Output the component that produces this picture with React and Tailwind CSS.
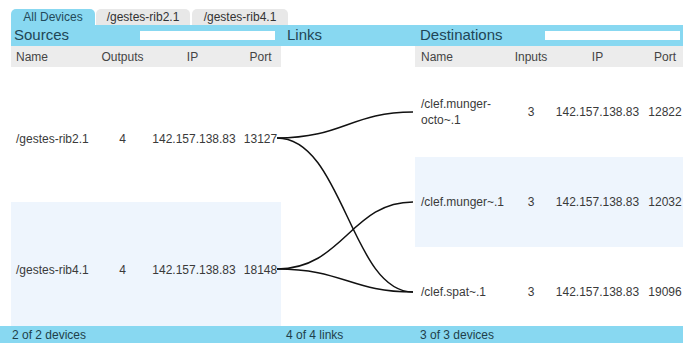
const sources = [
  { name: "/gestes-rib2.1", n: "4", ip: "142.157.138.83", port: "13127", bg: "bg-white pt-[8px]" },
  { name: "/gestes-rib4.1", n: "4", ip: "142.157.138.83", port: "18148", bg: "bg-[#eef5fd]" },
]

const destinations = [
  { name: ["/clef.munger-", "octo~.1"], n: "3", ip: "142.157.138.83", port: "12822", bg: "bg-white" },
  { name: ["/clef.munger~.1"], n: "3", ip: "142.157.138.83", port: "12032", bg: "bg-[#eef5fd]" },
  { name: ["/clef.spat~.1"], n: "3", ip: "142.157.138.83", port: "19096", bg: "bg-white" },
]

// link curves, svg coords (x=0 at left of links column, y=0 at top of body)
const links = [
  [71, 45],
  [71, 225],
  [202, 135],
  [202, 225],
]

const Links = () => (
  <svg width="134" height="259" className="overflow-visible">
    {links.map(([a, b], i) => (
      <path
        key={i}
        d={`M -4 ${a} C 62 ${a} 70 ${b} 132 ${b}`}
        fill="none"
        stroke="#111"
        strokeWidth="1.5"
      />
    ))}
  </svg>
)

export default function App() {
  return (
    <div
      className="relative w-[683px] h-[343px] bg-white overflow-hidden text-[12px] text-[#3a3a3a]"
      style={{ fontFamily: "'Liberation Sans', Arial, sans-serif" }}
    >
      {/* tabs */}
      <div className="flex items-end h-[25px] pl-[11px] gap-[1px]">
        <div className="h-[16px] w-[84px] rounded-t-[5px] bg-[#88d8f1] text-[#234a5a] flex items-center justify-center">
          All Devices
        </div>
        <div className="h-[16px] w-[94px] rounded-t-[5px] bg-[#e8e8e8] text-[#333] flex items-center justify-center">
          /gestes-rib2.1
        </div>
        <div className="h-[16px] w-[96px] ml-[1px] rounded-t-[5px] bg-[#e8e8e8] text-[#333] flex items-center justify-center">
          /gestes-rib4.1
        </div>
      </div>

      {/* header bar */}
      <div className="ml-[11px] h-[21px] bg-[#88d8f1] flex items-center text-[15px] text-[#1f4656]">
        <div className="w-[270px] flex items-center pl-[3px]">
          <span>Sources</span>
          <div className="ml-auto mr-[6px] w-[135px] h-[9px] bg-white" />
        </div>
        <div className="w-[134px] pl-[6px]">Links</div>
        <div className="flex-1 flex items-center pl-[5px]">
          <span>Destinations</span>
          <div className="ml-auto mr-[3px] w-[135px] h-[9px] bg-white" />
        </div>
      </div>

      {/* table */}
      <div className="ml-[11px] flex">
        {/* sources */}
        <div className="w-[270px]">
          <div className="h-[21px] bg-[#ececec] flex items-center text-[#444]">
            <div className="w-[89px] pl-[5px]">Name</div>
            <div className="w-[45px] text-center">Outputs</div>
            <div className="w-[95px] text-center">IP</div>
            <div className="w-[41px] text-center">Port</div>
          </div>
          <div className="h-[259px] overflow-hidden">
            {sources.map((s) => (
              <div key={s.port} className={`h-[135px] flex items-center ${s.bg}`}>
                <div className="w-[89px] pl-[5px]">{s.name}</div>
                <div className="w-[45px] text-center">{s.n}</div>
                <div className="w-[95px] text-center pl-[3px]">{s.ip}</div>
                <div className="w-[41px] text-center">{s.port}</div>
              </div>
            ))}
          </div>
        </div>

        {/* links */}
        <div className="w-[134px]">
          <div className="h-[21px]" />
          <Links />
        </div>

        {/* destinations */}
        <div className="flex-1">
          <div className="h-[21px] bg-[#ececec] flex items-center text-[#444]">
            <div className="w-[99px] pl-[6px]">Name</div>
            <div className="w-[34px] text-center">Inputs</div>
            <div className="w-[99px] text-center">IP</div>
            <div className="flex-1 text-center">Port</div>
          </div>
          <div className="h-[259px] overflow-hidden">
            {destinations.map((d) => (
              <div key={d.port} className={`h-[90px] flex items-center ${d.bg}`}>
                <div className="w-[99px] pl-[6px] leading-[16px]">
                  {d.name.map((l) => (
                    <div key={l}>{l}</div>
                  ))}
                </div>
                <div className="w-[34px] text-center">{d.n}</div>
                <div className="w-[99px] text-center">{d.ip}</div>
                <div className="flex-1 text-center">{d.port}</div>
              </div>
            ))}
          </div>
        </div>
      </div>

      {/* footer */}
      <div className="absolute left-0 right-0 bottom-0 h-[17px] bg-[#88d8f1] flex items-center text-[#1f3f4a]">
        <div className="w-[281px] pl-[12px]">2 of 2 devices</div>
        <div className="w-[134px] pl-[5px]">4 of 4 links</div>
        <div className="pl-[5px]">3 of 3 devices</div>
      </div>
    </div>
  )
}
